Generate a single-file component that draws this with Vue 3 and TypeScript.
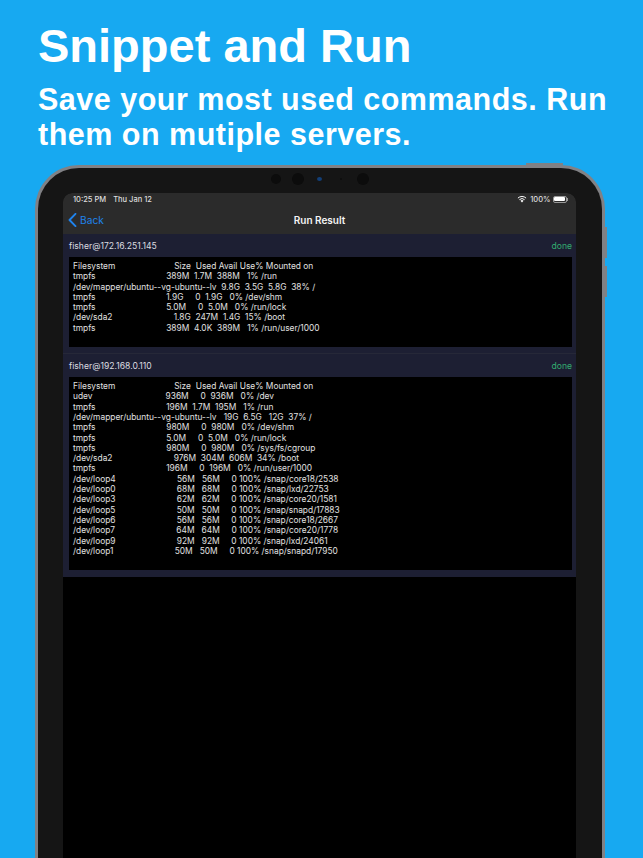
<script setup lang="ts">
interface Block { host: string; status: string; output: string }
const blocks: Block[] = [
  {
    host: 'fisher@172.16.251.145',
    status: 'done',
    output: `Filesystem                         Size  Used Avail Use% Mounted on
tmpfs                              389M  1.7M  388M   1% /run
/dev/mapper/ubuntu--vg-ubuntu--lv  9.8G  3.5G  5.8G  38% /
tmpfs                              1.9G     0  1.9G   0% /dev/shm
tmpfs                              5.0M     0  5.0M   0% /run/lock
/dev/sda2                          1.8G  247M  1.4G  15% /boot
tmpfs                              389M  4.0K  389M   1% /run/user/1000
`
  },
  {
    host: 'fisher@192.168.0.110',
    status: 'done',
    output: `Filesystem                         Size  Used Avail Use% Mounted on
udev                               936M     0  936M   0% /dev
tmpfs                              196M  1.7M  195M   1% /run
/dev/mapper/ubuntu--vg-ubuntu--lv   19G  6.5G   12G  37% /
tmpfs                              980M     0  980M   0% /dev/shm
tmpfs                              5.0M     0  5.0M   0% /run/lock
tmpfs                              980M     0  980M   0% /sys/fs/cgroup
/dev/sda2                          976M  304M  606M  34% /boot
tmpfs                              196M     0  196M   0% /run/user/1000
/dev/loop4                          56M   56M     0 100% /snap/core18/2538
/dev/loop0                          68M   68M     0 100% /snap/lxd/22753
/dev/loop3                          62M   62M     0 100% /snap/core20/1581
/dev/loop5                          50M   50M     0 100% /snap/snapd/17883
/dev/loop6                          56M   56M     0 100% /snap/core18/2667
/dev/loop7                          64M   64M     0 100% /snap/core20/1778
/dev/loop9                          92M   92M     0 100% /snap/lxd/24061
/dev/loop1                          50M   50M     0 100% /snap/snapd/17950
`
  }
]
</script>

<template>
  <div class="page">
    <header class="intro">
      <h1>Snippet and Run</h1>
      <h2>Save your most used commands. Run them on mutiple servers.</h2>
    </header>
    <div class="device">
      <span class="btn btn-top"></span>
      <span class="btn btn-vol1"></span>
      <span class="btn btn-vol2"></span>
      <div class="sensors">
        <i class="dot d1"></i><i class="dot d2"></i><i class="dot d3"></i><i class="dot d4"></i><i class="dot d5"></i>
      </div>
      <div class="screen">
        <div class="topbars">
          <div class="status">
            <span class="time">10:25 PM</span>
            <span class="date">Thu Jan 12</span>
            <span class="spacer"></span>
            <svg class="wifi" viewBox="0 0 12 9" width="10" height="8">
              <path d="M6 8.6 4.2 6.6a2.6 2.6 0 0 1 3.6 0Z" fill="#fff" />
              <path d="M2.9 5.3a4.6 4.6 0 0 1 6.2 0" fill="none" stroke="#fff" stroke-width="1.2" />
              <path d="M1.1 3.4a7.2 7.2 0 0 1 9.8 0" fill="none" stroke="#fff" stroke-width="1.2" />
            </svg>
            <span class="pct">100%</span>
            <span class="battery"><span class="fill"></span></span>
            <span class="nub"></span>
          </div>
          <nav class="nav">
            <a class="back">
              <svg viewBox="0 0 10 16" width="9" height="14">
                <path d="M8.4 1 1.6 8l6.8 7" fill="none" stroke="#1f83ec" stroke-width="2.2" stroke-linecap="round" stroke-linejoin="round" />
              </svg>
              <span>Back</span>
            </a>
            <span class="title">Run Result</span>
          </nav>
        </div>
        <section v-for="(b, i) in blocks" :key="b.host" class="block" :class="{ second: i === 1 }">
          <div class="block-head">
            <span class="host">{{ b.host }}</span>
            <span class="state">{{ b.status }}</span>
          </div>
          <pre class="term">{{ b.output }}</pre>
        </section>
      </div>
    </div>
  </div>
</template>

<style>
html, body { margin: 0; background: #17a9f1; }
</style>

<style scoped>
.page {
  width: 643px;
  height: 858px;
  overflow: hidden;
  background: #17a9f1;
  font-family: Inter, "Liberation Sans", sans-serif;
  display: flex;
  flex-direction: column;
}
.intro { flex: none; padding: 19px 20px 0 38px; height: 165px; box-sizing: border-box; color: #fff; font-family: "Liberation Sans", Arial, sans-serif; }
h1 { margin: 0; font-size: 47px; line-height: 54px; font-weight: 700; }
h2 { margin: 9px 0 0; font-size: 30.5px; line-height: 35px; font-weight: 700; letter-spacing: 0.5px; }

.device {
  position: relative;
  margin-left: 35px;
  width: 570px;
  flex: 1 0 auto;
  box-sizing: border-box;
  background: #151515;
  border: 3px solid #808185;
  border-bottom: 0;
  border-radius: 44px 44px 0 0;
  padding: 25px 26px 0 25px;
}
.btn { position: absolute; background: #808185; }
.btn-top { top: -5px; right: 39px; width: 37px; height: 2px; }
.btn-vol1 { top: 59px; right: -5px; width: 2px; height: 31px; }
.btn-vol2 { top: 98px; right: -5px; width: 2px; height: 31px; }

.sensors { position: absolute; inset: 0 0 auto 0; height: 25px; }
.dot { position: absolute; border-radius: 50%; background: #0c0c0c; }
.d1 { left: 233px; top: 6px; width: 10px; height: 10px; }
.d2 { left: 254px; top: 5px; width: 12px; height: 12px; }
.d3 { left: 279px; top: 9px; width: 5px; height: 4px; background: #123f78; }
.d4 { left: 302px; top: 10px; width: 2px; height: 2px; }
.d5 { left: 319px; top: 5px; width: 12px; height: 12px; }

.screen {
  height: 100%;
  background: #000;
  border-radius: 9px 9px 0 0;
  overflow: hidden;
}
.topbars { background: #2b2b2b; height: 41px; display: flex; flex-direction: column; }
.status {
  display: flex;
  align-items: center;
  height: 12px;
  padding: 0 8px 0 10px;
  color: #dedede;
  font-size: 7.5px;
  font-weight: 500;
}
.status .date { margin-left: 7px; }
.spacer { flex: 1; }
.wifi { margin-right: 3px; }
.pct { margin-right: 1px; }
.battery { width: 14px; height: 7px; margin-left: 1px; border: 0.5px solid #999; border-radius: 2px; box-sizing: border-box; padding: 0.5px; display: flex; }
.fill { flex: 1; background: #fff; border-radius: 1px; }
.nub { width: 1px; height: 3px; background: #999; margin-left: 0.5px; }

.nav { position: relative; flex: 1; display: flex; align-items: center; justify-content: center; }
.back { position: absolute; left: 5px; top: 8px; display: flex; align-items: center; gap: 3px; color: #1f83ec; font-size: 10.2px; }
.title { color: #f4f4f4; font-size: 10px; font-weight: 600; }

.block { background: #1d1f33; padding: 0 4px 6px 6px; }
.block.second { padding-bottom: 7px; border-top: 1px solid #262838; }
.block-head {
  height: 23px;
  display: flex;
  align-items: center;
  justify-content: space-between;
  font-size: 8.6px;
}
.host { color: #dcdce0; }
.state { color: #32ad70; }
.term {
  margin: 0;
  background: #000;
  color: #e0e0e0;
  font-family: Inter, "Liberation Sans", sans-serif;
  font-size: 8.4px;
  line-height: 10.3px;
  padding: 4px 4px 14px;
  white-space: pre;
  overflow: hidden;
}
</style>
